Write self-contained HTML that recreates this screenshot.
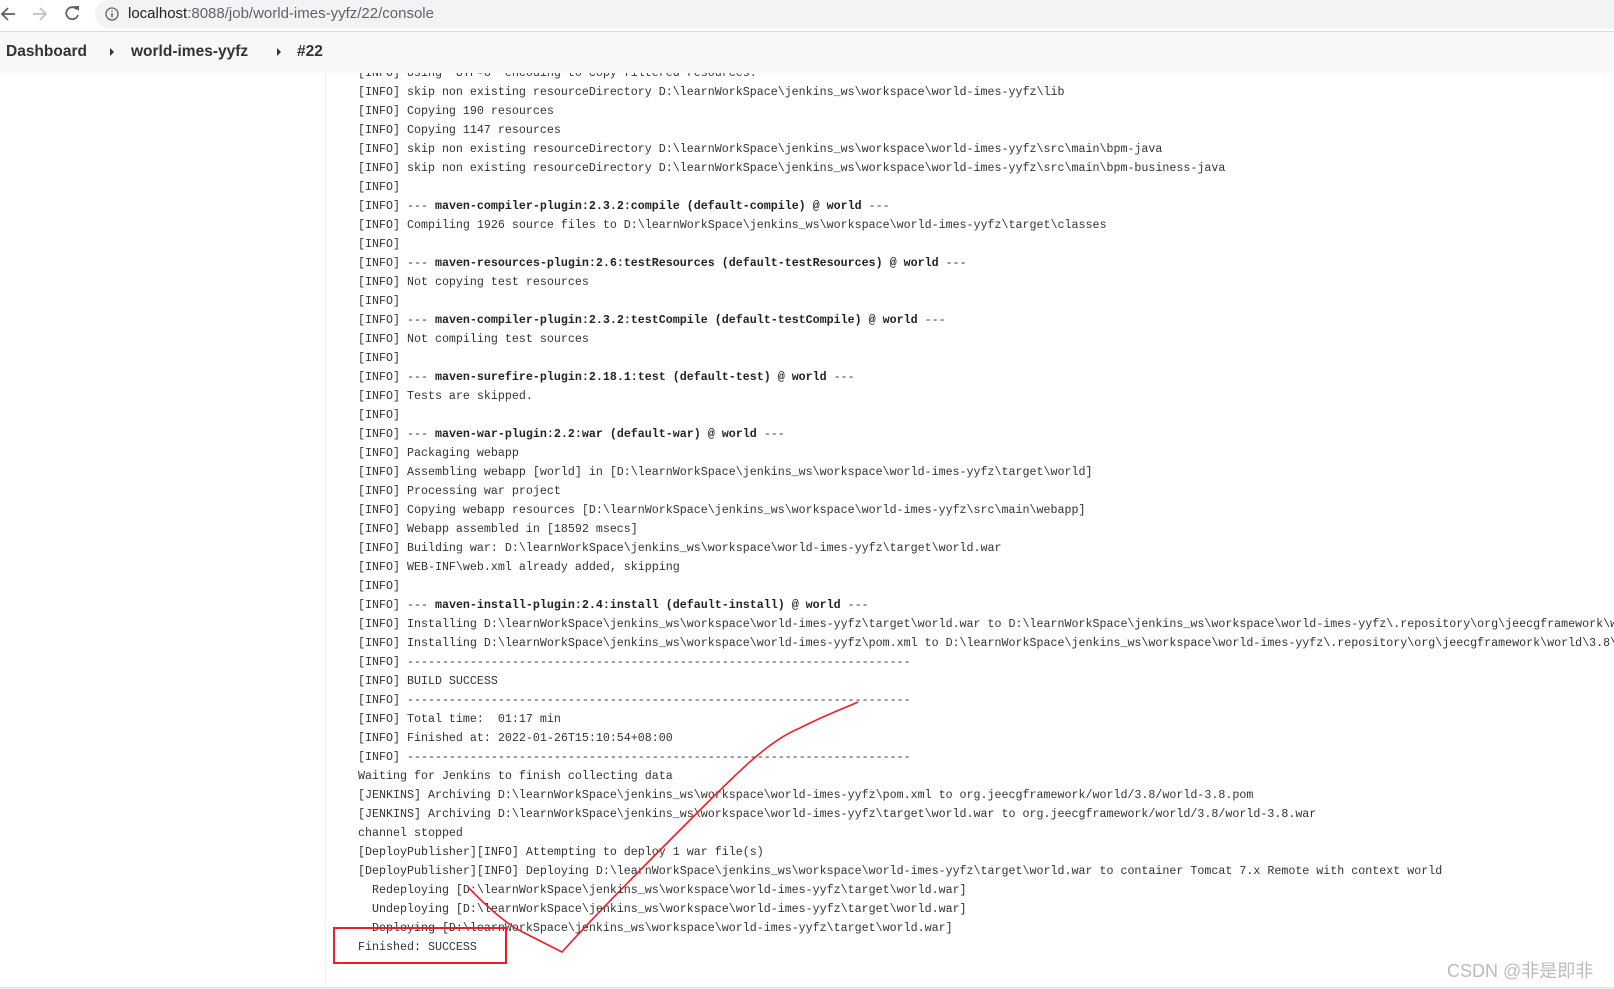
<!DOCTYPE html>
<html><head><meta charset="utf-8">
<style>
*{margin:0;padding:0;box-sizing:border-box}
html,body{width:1614px;height:989px;overflow:hidden;background:#fff;position:relative}
.top{position:absolute;left:0;top:0;width:1614px;height:32px;background:#fff;border-bottom:1px solid #dadce0;z-index:3;overflow:hidden}
.omni{position:absolute;left:95px;top:0;width:1519px;height:28px;background:#f1f3f4;border-radius:14px 0 0 14px;font-family:"Liberation Sans",sans-serif;font-size:15px;color:#202124;line-height:28px;padding-left:33px}
.omni .g{color:#5f6368}
.crumb{position:absolute;left:0;top:32px;width:1614px;height:41px;background:#f8f8f8;z-index:3;font-family:"Liberation Sans",sans-serif;font-weight:bold;font-size:15.5px;color:#333}
.crumb span{position:absolute;top:11px}
.tri{position:absolute;top:16px;width:0;height:0;border-top:4px solid transparent;border-bottom:4px solid transparent;border-left:4px solid #333}
.side{position:absolute;left:325px;top:72px;width:1px;height:916px;background:#eceef1}
.bot{position:absolute;left:0;top:987px;width:1614px;height:2px;background:#e8ebee}
.wrap{position:absolute;left:358px;top:64px;width:1256px;height:920px;overflow:hidden;z-index:1}
pre{font-family:"Liberation Mono",monospace;font-size:11.67px;line-height:19px;color:#333;white-space:pre}
b{font-weight:bold;color:#222}
.wm{position:absolute;left:1447px;top:957px;font-family:"Liberation Sans","Noto Sans CJK SC",sans-serif;font-size:18px;color:#bbb;z-index:4;white-space:nowrap}
svg.ann{position:absolute;left:0;top:0;z-index:5}
</style></head><body>
<div class="top">
<svg width="90" height="28" style="position:absolute;left:0;top:0">
<path d="M15 14H3M8 8l-6 6 6 6" stroke="#5f6368" stroke-width="1.8" fill="none"/>
<path d="M33 14h12M40 8l6 6-6 6" stroke="#bdc1c6" stroke-width="1.8" fill="none"/>
<path d="M77 9.5A6 6 0 1 0 78 15" stroke="#5f6368" stroke-width="1.8" fill="none"/>
<path d="M74 6h5v5z" fill="#5f6368"/>
</svg>
<div class="omni"><svg width="14" height="14" style="position:absolute;left:10px;top:7px"><circle cx="7" cy="7" r="6" stroke="#5f6368" stroke-width="1.3" fill="none"/><path d="M7 6v4.5M7 3.5v1.3" stroke="#5f6368" stroke-width="1.4"/></svg>localhost<span class="g">:8088/job/world-imes-yyfz/22/console</span></div>
</div>
<div class="crumb">
<span style="left:6px">Dashboard</span><i class="tri" style="left:110px"></i>
<span style="left:131px">world-imes-yyfz</span><i class="tri" style="left:277px"></i>
<span style="left:297px">#22</span>
</div>
<div class="side"></div>
<div class="wrap"><pre>[INFO] Using 'UTF-8' encoding to copy filtered resources.
[INFO] skip non existing resourceDirectory D:\learnWorkSpace\jenkins_ws\workspace\world-imes-yyfz\lib
[INFO] Copying 190 resources
[INFO] Copying 1147 resources
[INFO] skip non existing resourceDirectory D:\learnWorkSpace\jenkins_ws\workspace\world-imes-yyfz\src\main\bpm-java
[INFO] skip non existing resourceDirectory D:\learnWorkSpace\jenkins_ws\workspace\world-imes-yyfz\src\main\bpm-business-java
[INFO]
[INFO] --- <b>maven-compiler-plugin:2.3.2:compile (default-compile) @ world</b> ---
[INFO] Compiling 1926 source files to D:\learnWorkSpace\jenkins_ws\workspace\world-imes-yyfz\target\classes
[INFO]
[INFO] --- <b>maven-resources-plugin:2.6:testResources (default-testResources) @ world</b> ---
[INFO] Not copying test resources
[INFO]
[INFO] --- <b>maven-compiler-plugin:2.3.2:testCompile (default-testCompile) @ world</b> ---
[INFO] Not compiling test sources
[INFO]
[INFO] --- <b>maven-surefire-plugin:2.18.1:test (default-test) @ world</b> ---
[INFO] Tests are skipped.
[INFO]
[INFO] --- <b>maven-war-plugin:2.2:war (default-war) @ world</b> ---
[INFO] Packaging webapp
[INFO] Assembling webapp [world] in [D:\learnWorkSpace\jenkins_ws\workspace\world-imes-yyfz\target\world]
[INFO] Processing war project
[INFO] Copying webapp resources [D:\learnWorkSpace\jenkins_ws\workspace\world-imes-yyfz\src\main\webapp]
[INFO] Webapp assembled in [18592 msecs]
[INFO] Building war: D:\learnWorkSpace\jenkins_ws\workspace\world-imes-yyfz\target\world.war
[INFO] WEB-INF\web.xml already added, skipping
[INFO]
[INFO] --- <b>maven-install-plugin:2.4:install (default-install) @ world</b> ---
[INFO] Installing D:\learnWorkSpace\jenkins_ws\workspace\world-imes-yyfz\target\world.war to D:\learnWorkSpace\jenkins_ws\workspace\world-imes-yyfz\.repository\org\jeecgframework\world\3.8\world-3.8.war
[INFO] Installing D:\learnWorkSpace\jenkins_ws\workspace\world-imes-yyfz\pom.xml to D:\learnWorkSpace\jenkins_ws\workspace\world-imes-yyfz\.repository\org\jeecgframework\world\3.8\world-3.8.pom
[INFO] ------------------------------------------------------------------------
[INFO] BUILD SUCCESS
[INFO] ------------------------------------------------------------------------
[INFO] Total time:  01:17 min
[INFO] Finished at: 2022-01-26T15:10:54+08:00
[INFO] ------------------------------------------------------------------------
Waiting for Jenkins to finish collecting data
[JENKINS] Archiving D:\learnWorkSpace\jenkins_ws\workspace\world-imes-yyfz\pom.xml to org.jeecgframework/world/3.8/world-3.8.pom
[JENKINS] Archiving D:\learnWorkSpace\jenkins_ws\workspace\world-imes-yyfz\target\world.war to org.jeecgframework/world/3.8/world-3.8.war
channel stopped
[DeployPublisher][INFO] Attempting to deploy 1 war file(s)
[DeployPublisher][INFO] Deploying D:\learnWorkSpace\jenkins_ws\workspace\world-imes-yyfz\target\world.war to container Tomcat 7.x Remote with context world
  Redeploying [D:\learnWorkSpace\jenkins_ws\workspace\world-imes-yyfz\target\world.war]
  Undeploying [D:\learnWorkSpace\jenkins_ws\workspace\world-imes-yyfz\target\world.war]
  Deploying [D:\learnWorkSpace\jenkins_ws\workspace\world-imes-yyfz\target\world.war]
Finished: SUCCESS</pre></div>
<div class="bot"></div>
<svg class="ann" width="1614" height="989">
<rect x="334" y="928" width="172" height="35" fill="none" stroke="#e8202a" stroke-width="2"/>
<path d="M468 887C485 905 500 918 515 928C530 936 548 945 562 952C600 910 650 860 700 810C740 770 770 740 800 728C825 715 845 708 858 702" fill="none" stroke="#e8202a" stroke-width="1.6"/>
</svg>
<div class="wm">CSDN @非是即非</div>
</body></html>
